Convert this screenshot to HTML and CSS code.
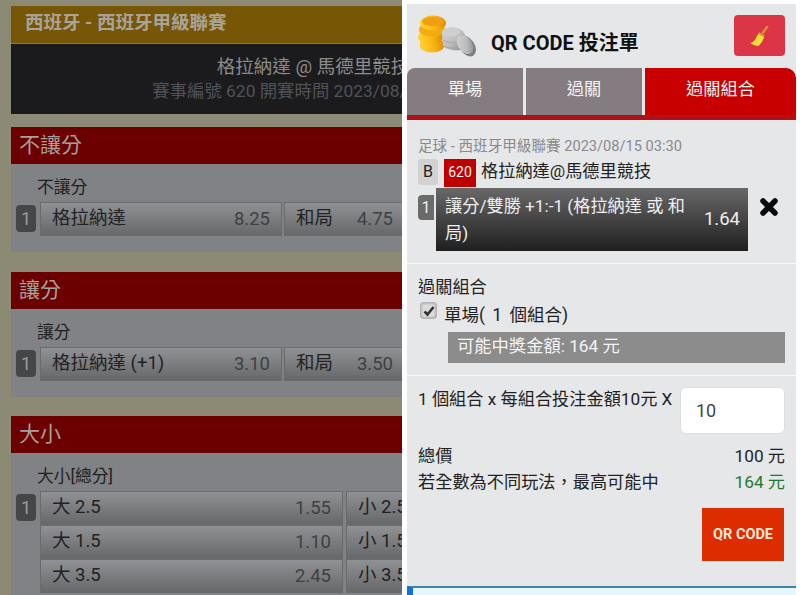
FILE: index.html
```html
<!DOCTYPE html>
<html lang="zh-Hant">
<head>
<meta charset="utf-8">
<title>QR CODE 投注單</title>
<link rel="stylesheet" href="styles.css">
</head>
<body>
<div class="screen">
  <main class="page">
    <div class="page-inner">
      <div class="league">西班牙 - 西班牙甲級聯賽</div>
      <div class="match">
        <div class="match-name">格拉納達 @ 馬德里競技</div>
        <div class="match-info">賽事編號 620 開賽時間 2023/08/15 03:30</div>
      </div>

      <section class="market">
        <h2 class="market-title">不讓分</h2>
        <div class="market-body">
          <div class="market-label">不讓分</div>
          <div class="odds">
            <span class="num">1</span>
            <div class="cells cells-three">
              <div class="cell"><span class="name">格拉納達</span><span class="price">8.25</span></div>
              <div class="cell"><span class="name">和局</span><span class="price">4.75</span></div>
            </div>
          </div>
        </div>
      </section>

      <section class="market">
        <h2 class="market-title">讓分</h2>
        <div class="market-body">
          <div class="market-label">讓分</div>
          <div class="odds">
            <span class="num">1</span>
            <div class="cells cells-three">
              <div class="cell"><span class="name">格拉納達 (+1)</span><span class="price">3.10</span></div>
              <div class="cell"><span class="name">和局</span><span class="price">3.50</span></div>
            </div>
          </div>
        </div>
      </section>

      <section class="market market-total">
        <h2 class="market-title">大小</h2>
        <div class="market-body">
          <div class="market-label">大小[總分]</div>
          <div class="odds">
            <span class="num">1</span>
            <div class="cells cells-two">
              <div class="cell"><span class="name">大 2.5</span><span class="price">1.55</span></div>
              <div class="cell"><span class="name">小 2.5</span><span class="price">2.30</span></div>
              <div class="cell"><span class="name">大 1.5</span><span class="price">1.10</span></div>
              <div class="cell"><span class="name">小 1.5</span><span class="price">5.50</span></div>
              <div class="cell"><span class="name">大 3.5</span><span class="price">2.45</span></div>
              <div class="cell"><span class="name">小 3.5</span><span class="price">1.50</span></div>
            </div>
          </div>
        </div>
      </section>
    </div>
  </main>

  <aside class="slip">
    <header class="slip-head">
      <svg class="coins" width="60" height="42" viewBox="0 0 60 42" aria-hidden="true">
        <defs>
          <linearGradient id="gold" x1="0" y1="0" x2="1" y2="0">
            <stop offset="0" stop-color="#ffd531"/><stop offset="0.6" stop-color="#fbb313"/><stop offset="1" stop-color="#d98b08"/>
          </linearGradient>
          <linearGradient id="silver" x1="0" y1="0" x2="1" y2="1">
            <stop offset="0" stop-color="#d6d6d6"/><stop offset="0.55" stop-color="#bdbdbd"/><stop offset="1" stop-color="#858585"/>
          </linearGradient>
        </defs>
        <ellipse cx="14" cy="30" rx="12.500" ry="7.500" fill="url(#gold)"/>
        <ellipse cx="12.500" cy="22" rx="12.500" ry="7.500" fill="url(#gold)"/>
        <ellipse cx="14" cy="14.500" rx="13" ry="7" fill="#f4ab10"/>
        <ellipse cx="15" cy="8" rx="13" ry="7.500" fill="url(#gold)"/>
        <ellipse cx="15" cy="6.500" rx="11" ry="4.500" fill="#ee9f12"/>
        <path d="M24 19c0-4 8-8 15-6 4 1 7 4 8 7l-4 15c-6 1-14 0-18-4z" fill="url(#silver)"/>
        <ellipse cx="33" cy="17" rx="9" ry="4.500" fill="#cfcfcf"/>
        <path d="M25 25c5 3 12 3 18 1M25 31c5 2 11 3 17 1" fill="none" stroke="#a8a8a8" stroke-width="1"/>
        <ellipse cx="49" cy="31" rx="7.500" ry="11.500" transform="rotate(-35 49 31)" fill="#808080"/>
        <ellipse cx="47" cy="29.500" rx="7" ry="10.500" transform="rotate(-35 47 29.500)" fill="url(#silver)"/>
      </svg>
      <h1 class="slip-title">QR CODE 投注單</h1>
      <button class="broom-btn" type="button" aria-label="清除">
        <svg width="21" height="24" viewBox="0 0 24 26" aria-hidden="true">
          <path d="M20 1l2.500 1.500-6 8.500-2.500-1.500z" fill="#e38a34"/>
          <path d="M12 9l5.500 3.500c-.2 2-1.200 5-3 7.500-1.200 1.700-2.800 3.500-4 4.500-2 0-6.500-1.500-9-3.500 2.500-.5 4.500-2.500 6-5 1.200-2 2.500-5 4.500-7z" fill="#f6dc38"/>
          <path d="M12 9l5.500 3.500-1 1.500-6-3.500z" fill="#bfa32c"/>
        </svg>
      </button>
    </header>

    <nav class="tabs">
      <a class="tab">單場</a>
      <a class="tab">過關</a>
      <a class="tab tab-active">過關組合</a>
    </nav>

    <section class="bet">
      <div class="bet-meta">足球 - 西班牙甲級聯賽 2023/08/15 03:30</div>
      <div class="bet-match">
        <span class="tag-b">B</span>
        <span class="tag-id">620</span>
        <span class="bet-teams">格拉納達@馬德里競技</span>
      </div>
      <div class="bet-line">
        <span class="bet-num">1</span>
        <div class="bet-pick">
          <span class="bet-pick-text">讓分/雙勝 +1:-1 (格拉納達 或 和局)</span>
          <span class="bet-odds">1.64</span>
        </div>
        <svg class="bet-remove" width="18" height="18" viewBox="0 0 18 18" aria-label="移除">
          <path d="M3 3L15 15M15 3L3 15" stroke="#0a0a0a" stroke-width="5.500" stroke-linecap="round"/>
        </svg>
      </div>
    </section>

    <section class="combo">
      <div class="combo-title">過關組合</div>
      <div class="combo-option">
        <span class="check">
          <svg width="12" height="12" viewBox="0 0 12 12" aria-hidden="true"><path d="M1.500 6.500L4.500 9.500 10.500 2" fill="none" stroke="#333" stroke-width="2.600"/></svg>
        </span>
        <span class="combo-label">單場( 1 個組合)</span>
      </div>
      <div class="combo-win">可能中獎金額: 164 元</div>
    </section>

    <section class="total">
      <div class="stake">
        <span>1 個組合 x 每組合投注金額10元 X</span>
        <input class="stake-input" type="text" value="10">
      </div>
      <div class="total-row"><span>總價</span><span>100 元</span></div>
      <div class="total-row"><span>若全數為不同玩法，最高可能中</span><span class="green">164 元</span></div>
      <div class="submit-row"><button class="qr-btn" type="button">QR CODE</button></div>
    </section>

    <div class="notice"></div>
  </aside>
</div>
</body>
</html>
```
FILE: styles.css
```css
* { box-sizing: border-box; }
html, body { margin: 0; padding: 0; height: 100%; overflow: hidden; background: #fff; }
body { font-family: Roboto, "Noto Sans CJK TC", sans-serif; color: #222; }
.screen { display: flex; width: 800px; height: 595px; overflow: hidden; }

.page { width: 402px; flex: none; height: 595px; overflow: hidden; background: #8c8a75; padding: 6px 0 0 11px; }
.page-inner { width: 604px; }
.league { height: 38px; background: #775706; color: #a8a49a; font-size: 18.500px; font-weight: 700; line-height: 35px; padding-left: 14px; border-bottom: 1px solid #8f7a35; white-space: nowrap; }
.match { height: 70px; background: #1b1b1d; text-align: center; padding-top: 11px; line-height: 24px; white-space: nowrap; }
.match-name { color: #8b8b8b; font-size: 18.500px; }
.match-info { color: #4f5257; font-size: 17.400px; }

.market { margin-top: 13px; margin-bottom: 20px; }
.market + .market { margin-top: 0; }
.market + .market-total { margin-top: -1px; }
.market-title { margin: 0; height: 37px; background: #6c0000; color: #a8a09c; font-size: 21px; font-weight: 400; line-height: 36px; padding-left: 8px; }
.market-body { background: #808285; height: 88px; padding: 11px 0 0 5px; }
.market-total .market-body { height: 142px; }
.market-label { color: #1f1f1f; font-size: 16.800px; line-height: 24px; padding-left: 21px; margin-bottom: 3px; }
.odds { display: flex; align-items: flex-start; gap: 4px; }
.num { width: 20px; height: 27px; margin-top: 3px; border-radius: 4px; background: #454648; color: #9a9c9e; font-size: 18px; line-height: 27px; text-align: center; flex: none; }
.cells { display: grid; flex: 1; min-width: 0; }
.cells-three { grid-template-columns: 242px 121px 1fr; column-gap: 2px; }
.cells-two { grid-template-columns: 303px 1fr; column-gap: 3px; }
.cell { display: flex; justify-content: space-between; align-items: center; height: 34px; padding: 0 11px; font-size: 18.500px; color: #222; background: linear-gradient(#8f9194, #66686a); border: 1px solid #6a6b6d; overflow: hidden; white-space: nowrap; }
.name { margin-top: -6px; }
.price { color: #3f4042; }

.slip { width: 389px; height: 591px; flex: none; margin: 4px 0 0 5px; overflow: hidden; display: flex; flex-direction: column; background: #e6e7e9; }
.slip-head { display: flex; align-items: flex-start; height: 64px; padding: 11px 11px 0; flex: none; }
.coins { flex: none; margin-right: 13px; }
.slip-title { margin: 14px auto 0 0; font-size: 20px; font-weight: 700; line-height: 28px; color: #111; }
.broom-btn { width: 51px; height: 41px; padding: 0; border: 0; border-radius: 4px; background: #dc3545; display: flex; align-items: center; justify-content: center; flex: none; }

.tabs { display: flex; gap: 3px; height: 52px; background: linear-gradient(transparent 47px, #b01016 47px); flex: none; }
.tab { width: 116px; height: 47px; background: #847c80; color: #f4f4f4; font-size: 17.200px; line-height: 43px; text-align: center; }
.tab:first-child { border-top-left-radius: 8px; }
.tab-active { flex: 1; background: #c80000; border-top-right-radius: 10px; }

.bet { height: 144px; flex: none; padding: 15px 11px 0; border-bottom: 1px solid #fafafa; }
.bet-meta { color: #8a8a8a; font-size: 14.600px; line-height: 22px; white-space: nowrap; }
.bet-match { display: flex; align-items: flex-start; margin-top: 2px; height: 29px; }
.tag-b { width: 20px; height: 26px; background: #d2d2d2; border-radius: 3px; color: #222; font-size: 16px; line-height: 26px; text-align: center; margin-right: 6px; }
.tag-id { width: 32px; height: 28px; background: #c00000; color: #f6f6f6; font-size: 14px; line-height: 26px; text-align: center; margin-right: 5px; }
.bet-teams { font-size: 17.200px; line-height: 24px; color: #222; }
.bet-line { display: flex; align-items: flex-start; }
.bet-num { width: 16px; height: 25px; margin-top: 7px; margin-right: 2px; background: #6b6b6b; border-radius: 4px 0 0 4px; color: #eee; font-size: 16px; line-height: 25px; text-align: center; flex: none; }
.bet-pick { width: 312px; height: 63px; background: linear-gradient(#686868, #1f1f1f); color: #efefef; display: flex; align-items: center; padding: 0 8px 0 9px; flex: none; font-size: 17.200px; line-height: 27px; }
.bet-pick-text { flex: 1; min-width: 0; }
.bet-odds { flex: none; margin-left: 10px; font-size: 18.500px; }
.bet-remove { margin: 10px 0 0 12px; flex: none; }

.combo { height: 112px; flex: none; padding: 10px 11px 0; border-bottom: 1px solid #fafafa; font-size: 17.200px; }
.combo-title { line-height: 26px; color: #222; }
.combo-option { display: flex; align-items: flex-start; height: 27px; }
.combo-label { font-size: 17.500px; line-height: 30px; word-spacing: 3px; }
.check { width: 17px; height: 17px; margin: 2px 7px 0 2px; background: #dcdcdc; border: 1px solid #b4b4b4; border-radius: 3px; display: flex; align-items: center; justify-content: center; box-shadow: inset 0 0 3px #8f8f8f; }
.combo-win { margin: 5px 0 0 30px; height: 31px; background: #8c8c8c; color: #f4f4f4; line-height: 29px; padding-left: 9px; font-size: 17.300px; }

.total { flex: none; height: 210px; padding: 11px 11px 0; font-size: 17.200px; color: #222; }
.stake { display: flex; justify-content: space-between; align-items: flex-start; white-space: nowrap; height: 56px; line-height: 24px; }
.stake-input { width: 105px; height: 47px; flex: none; border: 1px solid #ddd; border-radius: 6px; background: #fff; font: inherit; font-size: 18px; color: #444; padding: 0 15px; }
.total-row { display: flex; justify-content: space-between; line-height: 26px; }
.green { color: #1e7a2e; }
.submit-row { display: flex; justify-content: flex-end; margin: 13px 1px 0 0; }
.qr-btn { width: 82px; height: 53px; padding: 0; border: 0; background: #dd2c00; color: #f6ead8; font-family: inherit; font-size: 14.500px; font-weight: 700; }

.notice { flex: 1; background: #e6f6fe; border-top: 2px solid #3a87ad; border-left: 6px solid #1173d4; }
```
